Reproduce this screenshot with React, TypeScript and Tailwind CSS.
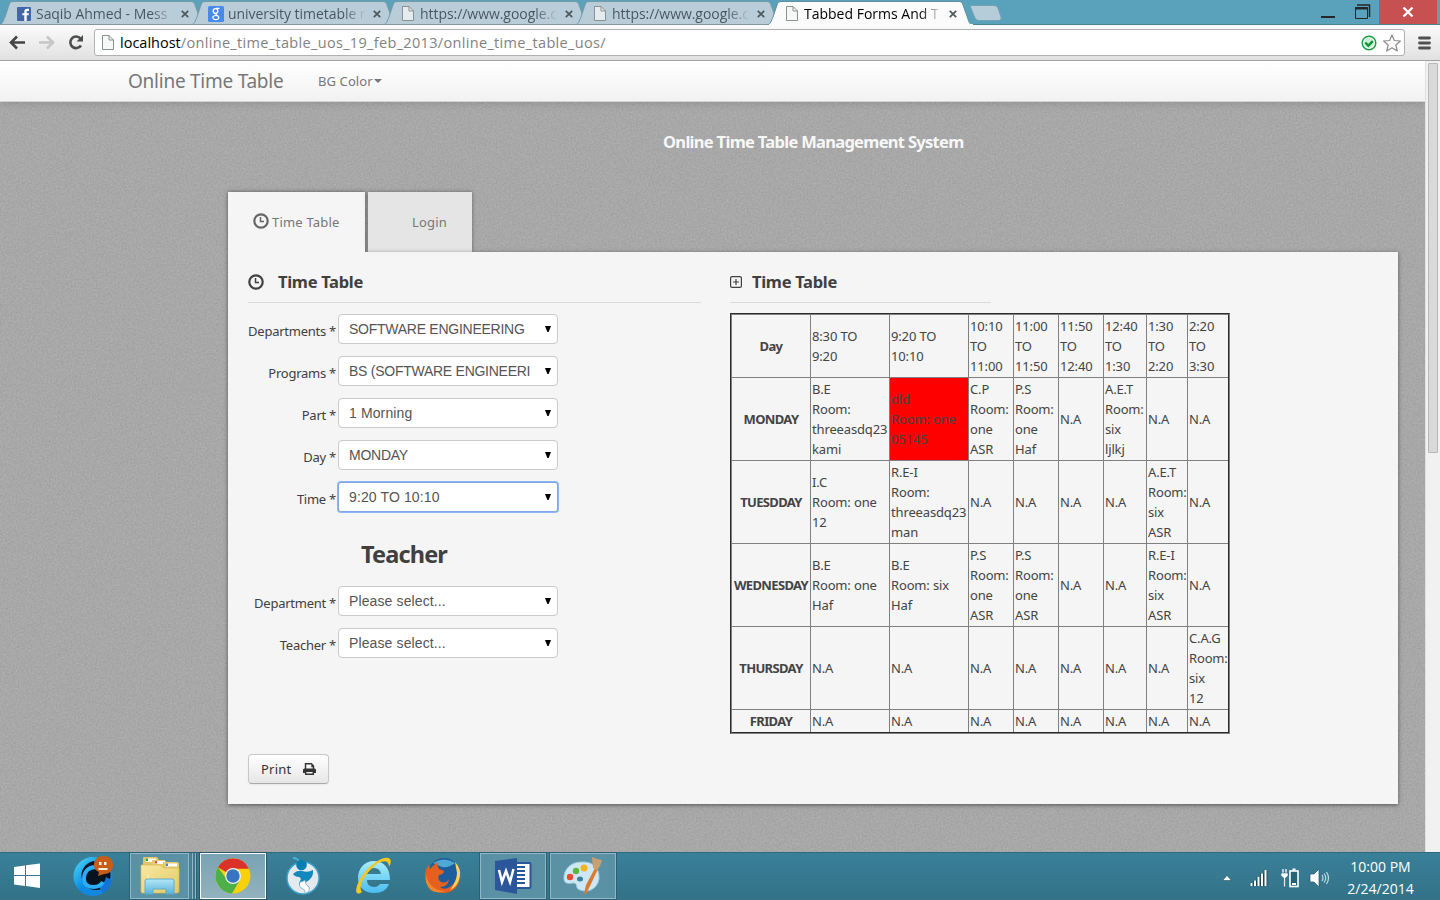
import React from "react";

const PageIcon = () => (
  <svg width="12" height="15" viewBox="0 0 12 15" className="shrink-0">
    <path d="M.5 .5h6.5l4.500 4.500v9.500h-11z" fill="#f4f6f6" fillOpacity=".75" stroke="#8a8f90" />
    <path d="M7 .5v4.500h4.500" fill="none" stroke="#8a8f90" />
  </svg>
);

const FacebookIcon = () => (
  <svg width="14" height="14" viewBox="0 0 14 14" className="-ml-px shrink-0">
    <rect width="14" height="14" rx="1" fill="#4267a8" />
    <path d="M7.300 14V8.300H5.300V6.200h2V4.800c0-2 1-3 2.800-3h1.900v2.100h-1.200c-.8 0-1.100.3-1.100 1v1.300h2.200l-.3 2.100H9.700V14z" fill="#fff" />
  </svg>
);

const GoogleIcon = () => (
  <svg width="16" height="16" viewBox="0 0 16 16" className="-ml-[2px] shrink-0">
    <rect width="16" height="16" rx="1.500" fill="#4889ee" />
    <ellipse cx="7.500" cy="5" rx="2.300" ry="2.400" fill="none" stroke="#fff" strokeWidth="1.300" />
    <path d="M8 2.400h3.500M8.500 7.500c-2 1 .5 1.200 1.500 2.200" fill="none" stroke="#fff" strokeWidth="1.100" />
    <ellipse cx="7.800" cy="11.600" rx="3" ry="2.100" fill="none" stroke="#fff" strokeWidth="1.200" />
  </svg>
);

type TabProps = { title: string; icon: React.ReactNode; active?: boolean };

function BrowserTab({ title, icon, active }: TabProps) {
  return (
    <div className={active ? "relative z-10 h-[25px] w-[192px] shrink-0" : "relative h-[25px] w-[192px] shrink-0"}>
      <svg className="absolute top-0 left-0" width="212" height="25" viewBox="0 0 212 25">
        <path
          d="M1 25C5 24 5 21 7 17L11 5C12 2 13 1.500 16 1.500H192C195 1.500 196 2 197 5L202 19C203 23 204 24.500 208 25Z"
          fill={active ? "#fbfbfb" : "#b9cdd9"}
          stroke={active ? "#5d8ea2" : "#7799a8"}
          strokeWidth="1"
        />
        {active ? <path d="M3 25h204" stroke="#fbfbfb" strokeWidth="2" /> : <path d="M0 24.500h212" stroke="#8797a0" />}
      </svg>
      <div className="relative flex h-[27px] items-center pl-[18px]">
        <div className="flex w-5 justify-start pl-[2px]">{icon}</div>
        <div
          className={
            active
              ? "w-[141px] bg-gradient-to-r from-black from-82% to-transparent to-98% bg-clip-text font-['Open_Sans',sans-serif] text-[14px] leading-5 whitespace-nowrap text-transparent"
              : "w-[141px] bg-gradient-to-r from-[#46545c] from-82% to-transparent to-98% bg-clip-text font-['Open_Sans',sans-serif] text-[14px] leading-5 tracking-[-0.05px] whitespace-nowrap text-transparent"
          }
        >
          {title}
        </div>
        <svg width="8" height="8" viewBox="0 0 8 8" className="ml-[4px]">
          <path d="M.8.8l6.400 6.400M7.200.8L.8 7.200" stroke="#4d5659" strokeWidth="1.700" />
        </svg>
      </div>
    </div>
  );
}

function TabStrip() {
  return (
    <div className="flex h-[25px] w-full border-b border-[#4b8095] bg-[#5aa2bb]">
      <div className="-ml-[2px] flex">
        <BrowserTab title="Saqib Ahmed - Mess" icon={<FacebookIcon />} />
        <BrowserTab title="university timetable r" icon={<GoogleIcon />} />
        <BrowserTab title="https://www.google.c" icon={<PageIcon />} />
        <BrowserTab title="https://www.google.c" icon={<PageIcon />} />
        <BrowserTab title="Tabbed Forms And T" icon={<PageIcon />} active />
      </div>
      <svg width="34" height="18" viewBox="0 0 34 18" className="mt-[4px] ml-[11px]">
        <path d="M2 1.500H25Q28 1.500 29 4L32 13Q33 16 30 16.500H10Q7 16.500 6 14L1.500 3Q1 1.500 2 1.500Z" fill="#b5ccd9" stroke="#75a1b2" />
      </svg>
      <svg width="16" height="16" viewBox="0 0 16 16" className="mt-[4px] ml-auto">
        <path d="M0 13h14" stroke="#262626" strokeWidth="2" />
      </svg>
      <svg width="16" height="16" viewBox="0 0 16 16" className="mt-[4px] ml-[18px]">
        <path d="M.5 3.500h12v11H.5z" fill="none" stroke="#262626" />
        <path d="M0 4.500h13" stroke="#262626" strokeWidth="2" />
        <path d="M2 1h12.500v12" fill="none" stroke="#262626" strokeWidth="1.500" />
      </svg>
      <div className="mr-[3px] ml-[8px] flex h-[24px] w-[58px] items-center justify-center bg-[#c75050]">
        <svg width="12" height="10" viewBox="0 0 12 10">
          <path d="M1.500 .5l9 9M10.500 .5l-9 9" stroke="#fff" strokeWidth="2.200" />
        </svg>
      </div>
    </div>
  );
}

function Toolbar() {
  return (
    <div className="relative z-10 flex h-9 items-start border-b border-[#a3a3a3] bg-gradient-to-b from-[#fbfbfb] to-[#e1e1e1] pt-[4px] pl-[9px]">
      <svg width="17" height="26" viewBox="0 0 17 26">
        <path d="M1.500 13.500H16M8 7.500l-6 6 6 6" fill="none" stroke="#444" strokeWidth="2.600" />
      </svg>
      <svg width="17" height="26" viewBox="0 0 17 26" className="ml-[12px]">
        <path d="M1 13.500h14M9 7.500l6 6-6 6" fill="none" stroke="#c6c6c6" strokeWidth="2.600" />
      </svg>
      <svg width="18" height="26" viewBox="0 0 18 26" className="ml-[12px]">
        <path d="M13.500 9.500A5.800 5.800 0 1 0 14 16.500" fill="none" stroke="#4d4d4d" strokeWidth="2.600" />
        <path d="M16 6v6.500H9.500z" fill="#4d4d4d" />
      </svg>
      <div className="ml-[9px] flex h-[27px] w-[1311px] items-center rounded-[3px] border border-[#b0b0b0] bg-white pl-[7px]">
        <PageIcon />
        <div className="ml-[6px] font-['Open_Sans',sans-serif] text-[14.5px] leading-5 tracking-[0.33px] whitespace-nowrap text-[#828282]">
          <span className="tracking-normal text-black">localhost</span>/online_time_table_uos_19_feb_2013/online_time_table_uos/
        </div>
        <svg width="16" height="16" viewBox="0 0 16 16" className="ml-auto">
          <circle cx="8" cy="8" r="6.800" fill="#fff" stroke="#1b9e45" strokeWidth="1.500" />
          <circle cx="8" cy="8" r="5" fill="#cdeed6" />
          <path d="M4.300 7.500l3 3.200 4.500-4.500" fill="none" stroke="#0f9638" strokeWidth="2.400" />
        </svg>
        <svg width="18" height="18" viewBox="0 0 18 18" className="mr-[3px] ml-[6px]">
          <path d="M9 1l2.300 5.500 6.100.5-4.600 4 1.500 6L9 13.800 3.700 17l1.500-6L.6 7l6.100-.5z" fill="#fff" stroke="#8b8b8b" strokeWidth="1.200" strokeLinejoin="round" />
        </svg>
      </div>
      <svg width="14" height="14" viewBox="0 0 14 14" className="mt-[7px] ml-[12px]">
        <path d="M2.500 2h10M2.500 7h10M2.500 12h10" stroke="#505050" strokeWidth="2.800" strokeLinecap="round" />
      </svg>
    </div>
  );
}

const Clock = ({ color }: { color: string }) => (
  <svg width="16" height="16" viewBox="0 0 16 16" className="shrink-0">
    <circle cx="8" cy="8" r="6.700" fill="none" stroke={color} strokeWidth="2.200" />
    <path d="M7.500 4v4.600H11" fill="none" stroke={color} strokeWidth="1.500" />
  </svg>
);

function Field({ label, value, focused, caps }: { label: string; value: string; focused?: boolean; caps?: boolean }) {
  return (
    <div className="mb-3 flex h-[30px]">
      <div className="w-[88px] pt-[7px] text-right text-[13px] leading-5 tracking-[-0.25px] whitespace-nowrap text-[#404040]">{label} *</div>
      <div
        className={
          focused
            ? "ml-[2px] flex h-[30px] w-[220px] items-center rounded-[3px] border border-[#80a8e8] bg-white pr-[6px] pl-[10px] shadow-[0_0_0_1px_#8db4f3]"
            : "ml-[2px] flex h-[30px] w-[220px] items-center rounded-[4px] border border-[#cacaca] bg-white pr-[6px] pl-[10px]"
        }
      >
        <div
          className={
            caps
              ? "w-[182px] overflow-hidden font-['Liberation_Sans',sans-serif] text-[14px] leading-5 tracking-[-0.26px] whitespace-nowrap text-[#555]"
              : "w-[182px] overflow-hidden font-['Liberation_Sans',sans-serif] text-[14px] leading-5 tracking-[0.12px] whitespace-nowrap text-[#555]"
          }
        >
          {value}
        </div>
        <svg width="6" height="6" viewBox="0 0 6 6" className="ml-auto">
          <path d="M0 0h6L3.600 6H2.400z" fill="#000" />
        </svg>
      </div>
    </div>
  );
}

const columns = ["8:30 TO\n9:20", "9:20 TO\n10:10", "10:10\nTO\n11:00", "11:00\nTO\n11:50", "11:50\nTO\n12:40", "12:40\nTO\n1:30", "1:30\nTO\n2:20", "2:20\nTO\n3:30"];
const NA = "N.A";
const days: { day: string; cells: string[] }[] = [
  { day: "MONDAY", cells: ["B.E\nRoom:\nthreeasdq23\nkami", "dld\nRoom: one\n05145", "C.P\nRoom:\none\nASR", "P.S\nRoom:\none\nHaf", NA, "A.E.T\nRoom:\nsix\nljlkj", NA, NA] },
  { day: "TUESDDAY", cells: ["I.C\nRoom: one\n12", "R.E-I\nRoom:\nthreeasdq23\nman", NA, NA, NA, NA, "A.E.T\nRoom:\nsix\nASR", NA] },
  { day: "WEDNESDAY", cells: ["B.E\nRoom: one\nHaf", "B.E\nRoom: six\nHaf", "P.S\nRoom:\none\nASR", "P.S\nRoom:\none\nASR", NA, NA, "R.E-I\nRoom:\nsix\nASR", NA] },
  { day: "THURSDAY", cells: [NA, NA, NA, NA, NA, NA, NA, "C.A.G\nRoom:\nsix\n12"] },
  { day: "FRIDAY", cells: [NA, NA, NA, NA, NA, NA, NA, NA] },
];

function Cell({ text, busy, last, bottom }: { text: string; busy?: boolean; last?: boolean; bottom?: boolean }) {
  return (
    <div
      className={[
        "flex items-center border-[#808080] pl-px whitespace-pre",
        busy ? "bg-[#ff0000]" : "",
        last ? "" : "border-r",
        bottom ? "" : "border-b",
      ].join(" ")}
    >
      {text}
    </div>
  );
}

function DayCell({ text, bottom }: { text: string; bottom?: boolean }) {
  return (
    <div
      className={
        bottom
          ? "flex items-center justify-center border-r border-[#808080] text-[13px] font-bold tracking-[-0.65px]"
          : "flex items-center justify-center border-r border-b border-[#808080] text-[13px] font-bold tracking-[-0.65px]"
      }
    >
      {text}
    </div>
  );
}

function Schedule() {
  return (
    <div className="w-[500px] border border-t-[#2b2b2b] border-r-[#808080] border-b-[#808080] border-l-[#2b2b2b]">
      <div className="grid h-[419px] grid-cols-[79px_79px_79px_45px_45px_45px_43px_41px_40px] grid-rows-[63px_83px_83px_83px_83px_22px] border border-t-[#808080] border-r-[#2b2b2b] border-b-[#2b2b2b] border-l-[#808080] text-[13px] leading-5 tracking-[-0.15px] text-[#444]">
        <DayCell text="Day" />
        {columns.map((c, i) => (
          <Cell key={c} text={c} last={i === 7} />
        ))}
        {days.map((d, r) => (
          <React.Fragment key={d.day}>
            <DayCell text={d.day} bottom={r === 4} />
            {d.cells.map((c, i) => (
              <Cell key={i} text={c} busy={r === 0 && i === 1} last={i === 7} bottom={r === 4} />
            ))}
          </React.Fragment>
        ))}
      </div>
    </div>
  );
}

function Noise() {
  return (
    <svg className="absolute inset-0 h-full w-full opacity-35">
      <filter id="grain" x="0" y="0" width="100%" height="100%" colorInterpolationFilters="sRGB">
        <feTurbulence type="fractalNoise" baseFrequency="0.55" numOctaves="2" seed="4" />
        <feColorMatrix values=".28 0 0 0 .52  .28 0 0 0 .52  .28 0 0 0 .52  0 0 0 0 1" />
      </filter>
      <rect width="100%" height="100%" filter="url(#grain)" />
    </svg>
  );
}

function Page() {
  return (
    <div className="relative flex h-[791px] w-[1425px] flex-col overflow-hidden bg-[#a8a8a8] font-['Noto_Sans',sans-serif]">
      <Noise />
      <div className="relative flex h-[41px] shrink-0 items-center border-b border-[#d4d4d4] bg-gradient-to-b from-white to-[#f2f2f2] pl-[128px] text-[#777] shadow-[0_1px_8px_rgba(0,0,0,0.15)]">
        <div className="w-[190px] text-[19px] leading-5 tracking-[-0.25px] whitespace-nowrap">Online Time Table</div>
        <div className="text-[13px] leading-5 tracking-[0.1px] whitespace-nowrap">BG Color</div>
        <svg width="8" height="4" viewBox="0 0 8 4" className="ml-px">
          <path d="M0 0h8L4 4z" fill="#777" />
        </svg>
      </div>
      <div className="relative mt-[30px] h-5 pl-[663px] text-[16.5px] leading-5 font-bold tracking-[-0.7px] whitespace-nowrap text-[#f7f7f7]">Online Time Table Management System</div>
      <div className="relative mt-[40px] ml-[228px] flex h-[60px] gap-[3px] text-[13px] tracking-[0.2px] text-[#777]">
        <div className="flex w-[137px] items-center bg-[#f5f5f5] pl-[25px] shadow-[0_0_4px_rgba(0,0,0,0.5)]">
          <div className="mb-[2px] flex">
            <Clock color="#666" />
          </div>
          <span className="ml-[3px] pt-px whitespace-nowrap">Time Table</span>
        </div>
        <div className="flex w-[104px] items-center bg-[#e5e5e5] pt-px pl-[44px] shadow-[0_0_4px_rgba(0,0,0,0.4)]">Login</div>
      </div>
      <div className="relative ml-[228px] flex h-[552px] w-[1170px] bg-[#f5f5f5] pl-5 shadow-[0_1px_4px_rgba(0,0,0,0.5)]">
        <div className="absolute -top-[5px] left-0 h-[6px] w-[137px] bg-[#f5f5f5]" />
        <div className="w-[482px] pt-5">
          <div className="flex h-[31px] w-[453px] items-start border-b border-[#dadada]">
            <div className="mt-[2px] flex">
              <Clock color="#404040" />
            </div>
            <div className="ml-[14px] text-[16.5px] leading-5 font-bold tracking-[-0.3px] text-[#404040]">Time Table</div>
          </div>
          <div className="pt-[11px]">
            <Field label="Departments" value="SOFTWARE ENGINEERING" caps />
            <Field label="Programs" value="BS (SOFTWARE ENGINEERI" caps />
            <Field label="Part" value="1 Morning" />
            <Field label="Day" value="MONDAY" caps />
            <Field label="Time" value="9:20 TO 10:10" focused />
          </div>
          <h2 className="mt-[22px] pl-[113px] text-[23.5px] leading-10 font-bold tracking-[-0.85px] text-[#404040]">Teacher</h2>
          <div className="pt-[12px]">
            <Field label="Department" value="Please select..." />
            <Field label="Teacher" value="Please select..." />
          </div>
          <button className="mt-[96px] flex h-[30px] w-[81px] items-center rounded-[4px] border border-[#c8c8c8] border-b-[#aaa] bg-gradient-to-b from-white to-[#e6e6e6] pl-[12px] text-[13px] text-[#333] shadow-[0_1px_2px_rgba(0,0,0,0.06)]">
            <span className="w-[42px] pt-px text-left tracking-[0.2px]">Print</span>
            <svg width="13" height="12" viewBox="0 0 13 12">
              <path d="M2.500 6V.8h6L10.500 3v3M9 1v2.500h2" fill="none" stroke="#333" strokeWidth="1.400" />
              <path d="M0 10V7q0-1.500 1.500-1.500h10Q13 5.500 13 7v3z" fill="#333" />
              <path d="M2.700 8.200h7.600v3h-7.600z" fill="#f0f0f0" stroke="#333" strokeWidth="1.400" />
            </svg>
          </button>
        </div>
        <div className="w-[500px] pt-5">
          <div className="mb-[10px] flex h-[31px] w-[261px] items-start border-b border-[#dadada]">
            <svg width="12" height="12" viewBox="0 0 12 12" className="mt-[4px]">
              <rect x=".6" y=".6" width="10.800" height="10.800" rx="1.500" fill="none" stroke="#404040" strokeWidth="1.200" />
              <path d="M6 3v6M3 6h6" stroke="#404040" strokeWidth="1.200" />
            </svg>
            <div className="ml-[10px] text-[16.5px] leading-5 font-bold tracking-[-0.3px] text-[#404040]">Time Table</div>
          </div>
          <Schedule />
        </div>
      </div>
    </div>
  );
}

const ClientIcon = () => (
  <svg width="42" height="42" viewBox="0 0 42 42">
    <defs>
      <linearGradient id="ring" x1="0" y1="0" x2="1" y2="1">
        <stop offset="0" stopColor="#52dcff" />
        <stop offset=".5" stopColor="#0a8be0" />
        <stop offset="1" stopColor="#1f7fe0" />
      </linearGradient>
    </defs>
    <circle cx="21" cy="21.500" r="19.500" fill="url(#ring)" />
    <circle cx="24" cy="20.500" r="14.500" fill="#06141f" />
    <path d="M40 25A19 19 0 0 1 31 38L27 32Q33 28 34 22z" fill="#1474d6" />
    <path d="M24 12C15 12 12 18 12 24s5 8 10 8 7-2 9-5" fill="none" stroke="#2aaef5" strokeWidth="4" />
    <path d="M31 1c6 0 10 3 10 9s-4 9-9 9l-6 2 1-4c-4-2-5-4-5-7 0-6 4-9 9-9z" fill="#c75d18" />
    <path d="M27 7h2.500v3H27zM32 7h2.500v3H32zM26.500 13h9v2h-9z" fill="#fff1dc" />
  </svg>
);

const ExplorerIcon = () => (
  <svg width="40" height="40" viewBox="0 0 40 40">
    <defs>
      <linearGradient id="folder" x1="0" y1="0" x2="1" y2="1">
        <stop offset="0" stopColor="#f8eaa2" />
        <stop offset="1" stopColor="#e3c764" />
      </linearGradient>
      <linearGradient id="stand" x1="0" y1="0" x2="0" y2="1">
        <stop offset="0" stopColor="#b5e8f6" />
        <stop offset="1" stopColor="#58b2dd" />
      </linearGradient>
    </defs>
    <path d="M3 2q0-1 2-1h12l2 3v10H3z" fill="#e2c56b" />
    <path d="M6 2.500h10V6H6z" fill="#fff" />
    <path d="M6 2.500h2V5H6z" fill="#2da336" />
    <path d="M12 4h13l2 4v8H12z" fill="#e6ca71" />
    <path d="M15 5h10v3H15z" fill="#fff" />
    <path d="M15 5h2v2.500h-2z" fill="#e34e35" />
    <path d="M23 6h14q2 0 2 2v12H23z" fill="#e6ca71" />
    <path d="M26 7.500h11v3H26z" fill="#fff" />
    <path d="M26 7.500h2V10h-2z" fill="#318ed3" />
    <path d="M1 9h19l4 3h15v23q0 2-2 2H2q-1 0-1-2z" fill="url(#folder)" stroke="#d8b94e" strokeWidth=".7" />
    <path d="M8 17l1 7 5-3-3 5 7 1-8 1-3 3-4-2 4-2z" fill="#fffbd7" opacity=".7" />
    <path d="M5 38V25q0-2 2-2h25q2 0 2 2v13h-8v-5H13v5z" fill="url(#stand)" stroke="#61acca" />
  </svg>
);

const ChromeIcon = () => (
  <svg width="36" height="36" viewBox="0 0 36 36">
    <circle cx="18" cy="18" r="17.500" fill="#f9d00c" />
    <path d="M18 18L2.840 9.250A17.500 17.500 0 0 1 33.900 10.700H18z" fill="#dc3128" />
    <path d="M2.840 9.250A17.500 17.500 0 0 0 17 35.500l7-12-12-2z" fill="#4caf48" />
    <circle cx="18" cy="18" r="8" fill="#eef0ec" />
    <circle cx="18" cy="18" r="6.700" fill="#3676c0" />
  </svg>
);

const BirdIcon = () => (
  <svg width="36" height="40" viewBox="0 0 36 40">
    <circle cx="18" cy="22" r="16" fill="#e3e9ec" stroke="#3ba3cb" strokeWidth="1.500" />
    <path d="M8 2q5 0 7 5" fill="none" stroke="#49b3d8" strokeWidth="1.800" />
    <circle cx="16.500" cy="9" r="5.300" fill="#087fb1" />
    <path d="M8 18q4-4 9-3 6 2 11-1 1 8-7 12-5 3-4 5-5-2-2-6 2-3-1-4-4 0-6-3z" fill="#1288bd" />
    <path d="M15 26q-2 5 3 7 4 2 0 5 8-2 6-7-4-2-4-7-2 2-5 2z" fill="#fff" stroke="#72a9c0" strokeWidth=".8" />
  </svg>
);

const ExplorerE = () => (
  <svg width="40" height="40" viewBox="0 0 40 40">
    <defs>
      <linearGradient id="ie" x1="0" y1="0" x2="0" y2="1">
        <stop offset="0" stopColor="#a8edff" />
        <stop offset="1" stopColor="#4bbdf0" />
      </linearGradient>
    </defs>
    <path d="M37 24H14q0 7 7 7 4 0 6-3h9q-3 9-15 9C10 37 5 30 5 22 5 12 12 5 21 5s16 6 16 19zM14 18h14q-1-6-7-6t-7 6z" fill="url(#ie)" />
    <path d="M9 36C0 42 2 29 11 17 21 5 33-1 37 3q2 3-1 8 0-9-11-4C13 16 4 30 9 36z" fill="#f5c820" />
  </svg>
);

const FirefoxIcon = () => (
  <svg width="38" height="38" viewBox="0 0 38 38">
    <circle cx="20" cy="17" r="16" fill="#1d5d9b" />
    <path d="M9 6Q20-1 31 6q-6 5-13 4z" fill="#4fa9d6" />
    <path d="M35 11c4 15-4 25-16 25C8 36 1 28 1 19c0-4 1-8 4-11l1 4q2-3 8-7-1 5 1 7l5 2q0 3-5 4-2 5 2 7 5 2 8-3-1 8-9 8 5 4 11-1c5-4 7-9 6-17z" fill="#e5601e" />
    <path d="M31 5q6 6 5 14-2 11-10 14 7-9 7-17z" fill="#fbd25a" />
    <path d="M2 18q4 16 20 16-16 5-20-9z" fill="#f4862a" />
  </svg>
);

const WordIcon = () => (
  <svg width="37" height="38" viewBox="0 0 37 38">
    <rect x="17" y="6" width="18.500" height="25" rx="1" fill="#fff" stroke="#2b579a" strokeWidth="2" />
    <path d="M20 10h10M20 14h10M20 18h10M20 22h10M20 26h10" stroke="#2b579a" strokeWidth="2" />
    <path d="M0 4L22 1v36L0 33z" fill="#2b579a" />
    <path d="M4 13l3 12 4-11 4 11 3.500-13" fill="none" stroke="#fff" strokeWidth="2.500" />
  </svg>
);

const PaintIcon = () => (
  <svg width="42" height="40" viewBox="0 0 42 40">
    <path d="M19 6C31 5 38 12 37 23 35 34 25 37 18 34c-6-2-1-7-7-7-5 1-10 1-9-7C3 12 10 6 19 6z" fill="#cde8f4" stroke="#95c8df" />
    <ellipse cx="18" cy="23" rx="3" ry="2.500" fill="#3b7f9b" />
    <circle cx="8" cy="21" r="3.200" fill="#e74a32" />
    <circle cx="14" cy="15" r="3.200" fill="#58b83e" />
    <circle cx="22" cy="12" r="3.500" fill="#f6b318" />
    <path d="M22 38l2-9 9-17 3 1-7 15-5 10z" fill="#dc7b2d" />
    <path d="M30 1l5 2 5 1-2 6-3 4-4-2z" fill="#c9a171" />
  </svg>
);

function Taskbar() {
  const slot = "flex h-[46px] w-[66px] items-center justify-center mr-1";
  const open = "flex h-[46px] w-[66px] items-center justify-center mr-1 border border-[#91b6c4] bg-[#5b91a4] shadow-[0_0_0_1px_#2b6075]";
  return (
    <div className="relative z-20 flex h-12 items-start border-t border-[#2c6a80] bg-gradient-to-b from-[#398099] to-[#337287] font-['Open_Sans',sans-serif]">
      <div className="w-[60px] pt-[10px] pl-[14px]">
        <svg width="26" height="26" viewBox="0 0 26 26">
          <path d="M0 4l11-1.500V12H0zM12 2.300L26 .5V12H12zM0 13h11v10L0 21.500zM12 13h14v12L12 23z" fill="#fff" />
        </svg>
      </div>
      <div className={slot}><ClientIcon /></div>
      <div className="mr-1 flex h-[46px] w-[66px] shadow-[0_0_0_1px_#2b6075]">
        <div className="flex w-[59px] items-center justify-center border border-[#91b6c4] bg-[#5b91a4]"><ExplorerIcon /></div>
        <div className="w-[4px] border-r border-[#91b6c4] bg-[#477f93]" />
        <div className="w-[3px] border-r border-[#91b6c4] bg-[#3c788d]" />
      </div>
      <div className="mr-1 flex h-[46px] w-[66px] items-center justify-center border border-white bg-gradient-to-b from-[#7aa3b3] to-[#92b2be] shadow-[0_0_0_1px_#2b5668]"><ChromeIcon /></div>
      <div className={slot}><BirdIcon /></div>
      <div className={slot}><ExplorerE /></div>
      <div className={slot}><FirefoxIcon /></div>
      <div className={open}><WordIcon /></div>
      <div className={open}><PaintIcon /></div>
      <div className="ml-auto flex items-center pt-[3px]">
        <svg width="10" height="6" viewBox="0 0 10 6"><path d="M5 .5l4.500 5h-9z" fill="#fff" stroke="#254d5c" strokeWidth=".6" /></svg>
        <svg width="18" height="18" viewBox="0 0 18 18" className="ml-[18px]">
          <path d="M1.500 14v3M5 11.500V17M8.500 8v9M12 4.500V17M15.500 1v16" stroke="#1d4554" strokeWidth="3.600" />
          <path d="M1.500 14v3M5 11.500V17M8.500 8v9M12 4.500V17M15.500 1v16" stroke="#fff" strokeWidth="2" />
        </svg>
        <svg width="19" height="20" viewBox="0 0 19 20" className="ml-[13px]">
          <rect x="9" y="3" width="8" height="15.500" fill="#2a6175" stroke="#fff" strokeWidth="1.600" />
          <path d="M11.500 1.500h3M11 16h4" fill="none" stroke="#fff" strokeWidth="2" />
          <path d="M2 1v4M5 1v4" stroke="#fff" strokeWidth="1.300" />
          <path d="M0 5h7v3L4.500 10v9h-1.800v-9L0 8z" fill="#fff" stroke="#1d4554" strokeWidth=".5" />
        </svg>
        <svg width="21" height="20" viewBox="0 0 21 20" className="ml-[9px]">
          <path d="M1 6h4l5-5v18l-5-5H1z" fill="#fff" stroke="#285667" strokeWidth=".7" />
          <path d="M13 7q2 3 0 6M15 5.500q3.500 4.500 0 9M17.500 4q4 6 0 12" fill="none" stroke="#c3dbe4" strokeWidth="1.200" />
        </svg>
        <div className="ml-[15px] w-[95px] pr-[24px] text-center text-[14px] leading-[22px] whitespace-nowrap text-white">
          <div>10:00 PM</div>
          <div>2/24/2014</div>
        </div>
      </div>
    </div>
  );
}

export default function App() {
  return (
    <div className="flex h-[900px] w-[1440px] flex-col overflow-hidden">
      <TabStrip />
      <Toolbar />
      <div className="flex h-[791px]">
        <Page />
        <div className="w-[15px] border-l border-[#e0e0e0] bg-[#f1f1f1] pt-[2px] pl-[2px]">
          <div className="h-[390px] w-[10px] rounded-[1px] border border-[#b8b8b8] bg-[#d9d9d9]" />
        </div>
      </div>
      <Taskbar />
    </div>
  );
}
